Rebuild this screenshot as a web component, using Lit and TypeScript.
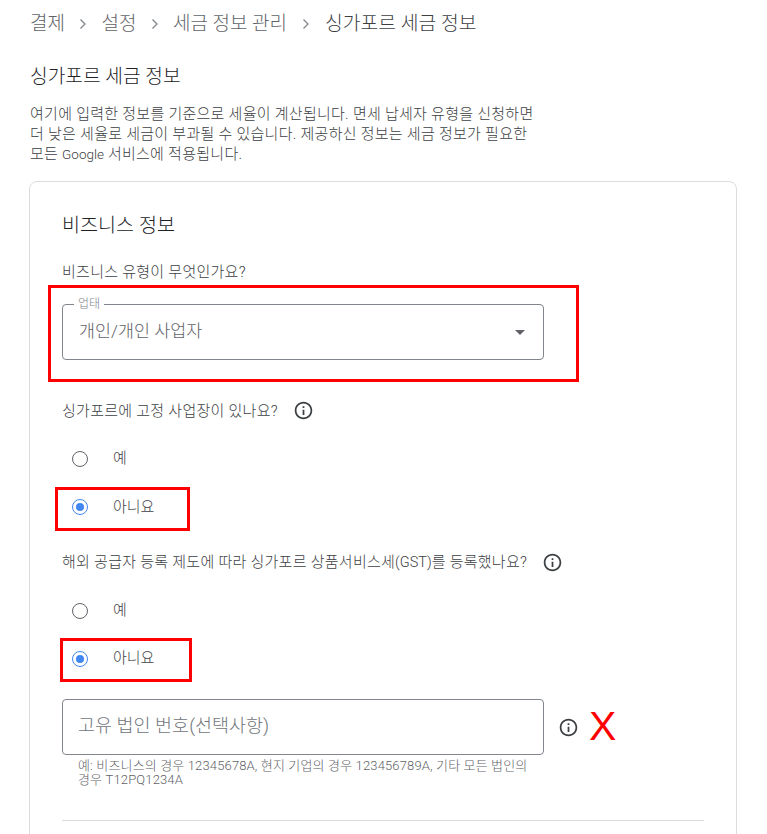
import { LitElement, html, css, svg } from "lit";
import { customElement } from "lit/decorators.js";

const info = () => html`<svg class="i" viewBox="0 0 24 24" aria-hidden="true">
  ${svg`<path fill="#3c4043" d="M11 7h2v2h-2zm0 4h2v6h-2zm1-9C6.48 2 2 6.48 2 12s4.48 10 10 10 10-4.48 10-10S17.52 2 12 2zm0 18c-4.41 0-8-3.59-8-8s3.59-8 8-8 8 3.59 8 8-3.59 8-8 8z"/>`}
</svg>`;

@customElement("app-root")
export class AppRoot extends LitElement {
  static styles = css`
    :host {
      display: block;
      height: 834px;
      overflow: hidden;
      background: #fff;
      font-family: Roboto, "Noto Sans CJK KR", sans-serif;
      color: #3c4043;
      font-size: 15px;
      font-weight: 300;
    }
    .page { padding: 10px 30px 0; width: 707px; }
    .la { font-size: 13.5px; letter-spacing: 0; }
    .gst { font-size: 14.5px; letter-spacing: 0; }
    .crumbs { display: flex; align-items: center; font-size: 19px; line-height: 28px; color: #5f6368; height: 28px; }
    .crumbs .sep { width: 36.5px; display: flex; justify-content: center; }
    .crumbs .sep.last { width: 38px; }
    .crumbs .sep svg { width: 8px; height: 12px; }
    .crumbs .cur { color: #3c4043; font-size: 19.3px; }
    h1 { margin: 27px 0 0; font-size: 19.2px; font-weight: 300; line-height: 24px; color: #202124; }
    .intro { margin: 15px 0 0; width: 530px; line-height: 20px; color: #3c4043; letter-spacing: 0.27px; }
    .card {
      margin: 17px 0 0 -1px;
      border: 1px solid #dadce0;
      border-radius: 8px;
      padding: 32px 32px 0;
      width: 642px;
      height: 800px;
    }
    h2 { margin: 0; font-size: 19.6px; font-weight: 300; line-height: 24px; color: #202124; }
    .q { line-height: 20px; display: flex; align-items: center; color: #3c4043; letter-spacing: 0.27px; }
    .q.first { margin-top: 24px; }
    .i { width: 21px; height: 21px; margin-left: 14px; flex: none; }
    .q .i { margin-left: 15px; }
    .red { border: 3px solid #f00; box-sizing: border-box; }
    .select-box { margin: 3px 0 0 -14px; width: 531px; height: 97px; padding: 16px 32px 0 11px; }
    .select {
      position: relative;
      box-sizing: border-box;
      width: 482px;
      height: 56px;
      border: 1px solid #80868b;
      border-radius: 4px;
      display: flex;
      align-items: center;
      justify-content: space-between;
      padding: 0 16px 5px;
      font-size: 17.4px;
      color: #5f6368;
    }
    .select .legend {
      position: absolute;
      left: 11px;
      top: -8px;
      padding: 0 4px;
      background: #fff;
      font-size: 12px;
      line-height: 14px;
      color: #80868b;
    }
    .arrow { width: 0; height: 0; border-left: 5px solid transparent; border-right: 5px solid transparent; border-top: 5px solid #5f6368; margin: 5px 2px 0 0; }
    .q.second { margin-top: 18px; }
    .radio { display: flex; align-items: center; height: 48px; padding-left: 10px; }
    .radio .dot {
      box-sizing: border-box;
      width: 16px;
      height: 16px;
      border: 1.5px solid #5f6368;
      border-radius: 50%;
      display: flex;
      align-items: center;
      justify-content: center;
      margin-right: 25px;
      position: relative;
      top: 1px;
    }
    .radio.on .dot { border-color: #4285f4; }
    .radio.on .dot::after { content: ""; width: 8px; height: 8px; border-radius: 50%; background: #4285f4; }
    .radio .t { position: relative; top: -2px; }
    .radios { margin-top: 13px; }
    .radio.on.red { height: 44px; }
    .r1 { width: 135px; margin: 5px 0 0 -7px; padding-left: 14px !important; }
    .r1 .dot { top: -2px; }
    .r1 .t { top: -4px; }
    .r2 { width: 132px; margin: 4px 0 0 -2px; padding-left: 9px !important; }
    .r2 .dot { top: -1px; }
    .r2 .t { top: -4px; }
    .q.third { margin-top: 21px; }
    .field-row { display: flex; align-items: center; margin-top: 17px; }
    .field {
      box-sizing: border-box;
      width: 482px;
      height: 56px;
      border: 1px solid #80868b;
      border-radius: 4px;
      display: flex;
      align-items: center;
      padding: 0 15px 6px;
      font-size: 18.5px;
      color: #70757a;
    }
    .x { margin: 0 0 2px 10px; font-family: "Liberation Sans", sans-serif; font-size: 41px; line-height: 46px; color: #f00; }
    .hint { margin: 4px 0 0 16px; width: 460px; font-size: 13px; line-height: 14px; color: #5f6368; letter-spacing: 0.15px; }
    hr { margin: 33px 0 0; border: 0; border-top: 1px solid #dadce0; }
  `;

  render() {
    const chev = html`<svg viewBox="0 0 8 12"><path d="M1.5 1.5 6 6l-4.5 4.5" fill="none" stroke="#80868b" stroke-width="1.3"/></svg>`;
    return html`<div class="page">
      <nav class="crumbs">
        <span>결제</span><span class="sep">${chev}</span>
        <span>설정</span><span class="sep">${chev}</span>
        <span>세금 정보 관리</span><span class="sep last">${chev}</span>
        <span class="cur">싱가포르 세금 정보</span>
      </nav>
      <h1>싱가포르 세금 정보</h1>
      <p class="intro">여기에 입력한 정보를 기준으로 세율이 계산됩니다. 면세 납세자 유형을 신청하면<br />더 낮은 세율로 세금이 부과될 수 있습니다. 제공하신 정보는 세금 정보가 필요한<br />모든 <span class="la">Google</span> 서비스에 적용됩니다.</p>
      <section class="card">
        <h2>비즈니스 정보</h2>
        <div class="q first">비즈니스 유형이 무엇인가요?</div>
        <div class="red select-box">
          <div class="select">
            <span class="legend">업태</span>
            <span>개인/개인 사업자</span>
            <span class="arrow"></span>
          </div>
        </div>
        <div class="q second">싱가포르에 고정 사업장이 있나요?${info()}</div>
        <div class="radios">
          <div class="radio"><span class="dot"></span><span class="t">예</span></div>
          <div class="radio on red r1"><span class="dot"></span><span class="t">아니요</span></div>
        </div>
        <div class="q third"><span>해외 공급자 등록 제도에 따라 싱가포르 상품서비스세<span class="gst">(GST)</span>를 등록했나요?</span>${info()}</div>
        <div class="radios">
          <div class="radio"><span class="dot"></span><span class="t">예</span></div>
          <div class="radio on red r2"><span class="dot"></span><span class="t">아니요</span></div>
        </div>
        <div class="field-row">
          <div class="field">고유 법인 번호(선택사항)</div>
          ${info()}
          <span class="x">X</span>
        </div>
        <div class="hint">예: 비즈니스의 경우 12345678A, 현지 기업의 경우 123456789A, 기타 모든 법인의<br />경우 T12PQ1234A</div>
        <hr />
      </section>
    </div>`;
  }
}
